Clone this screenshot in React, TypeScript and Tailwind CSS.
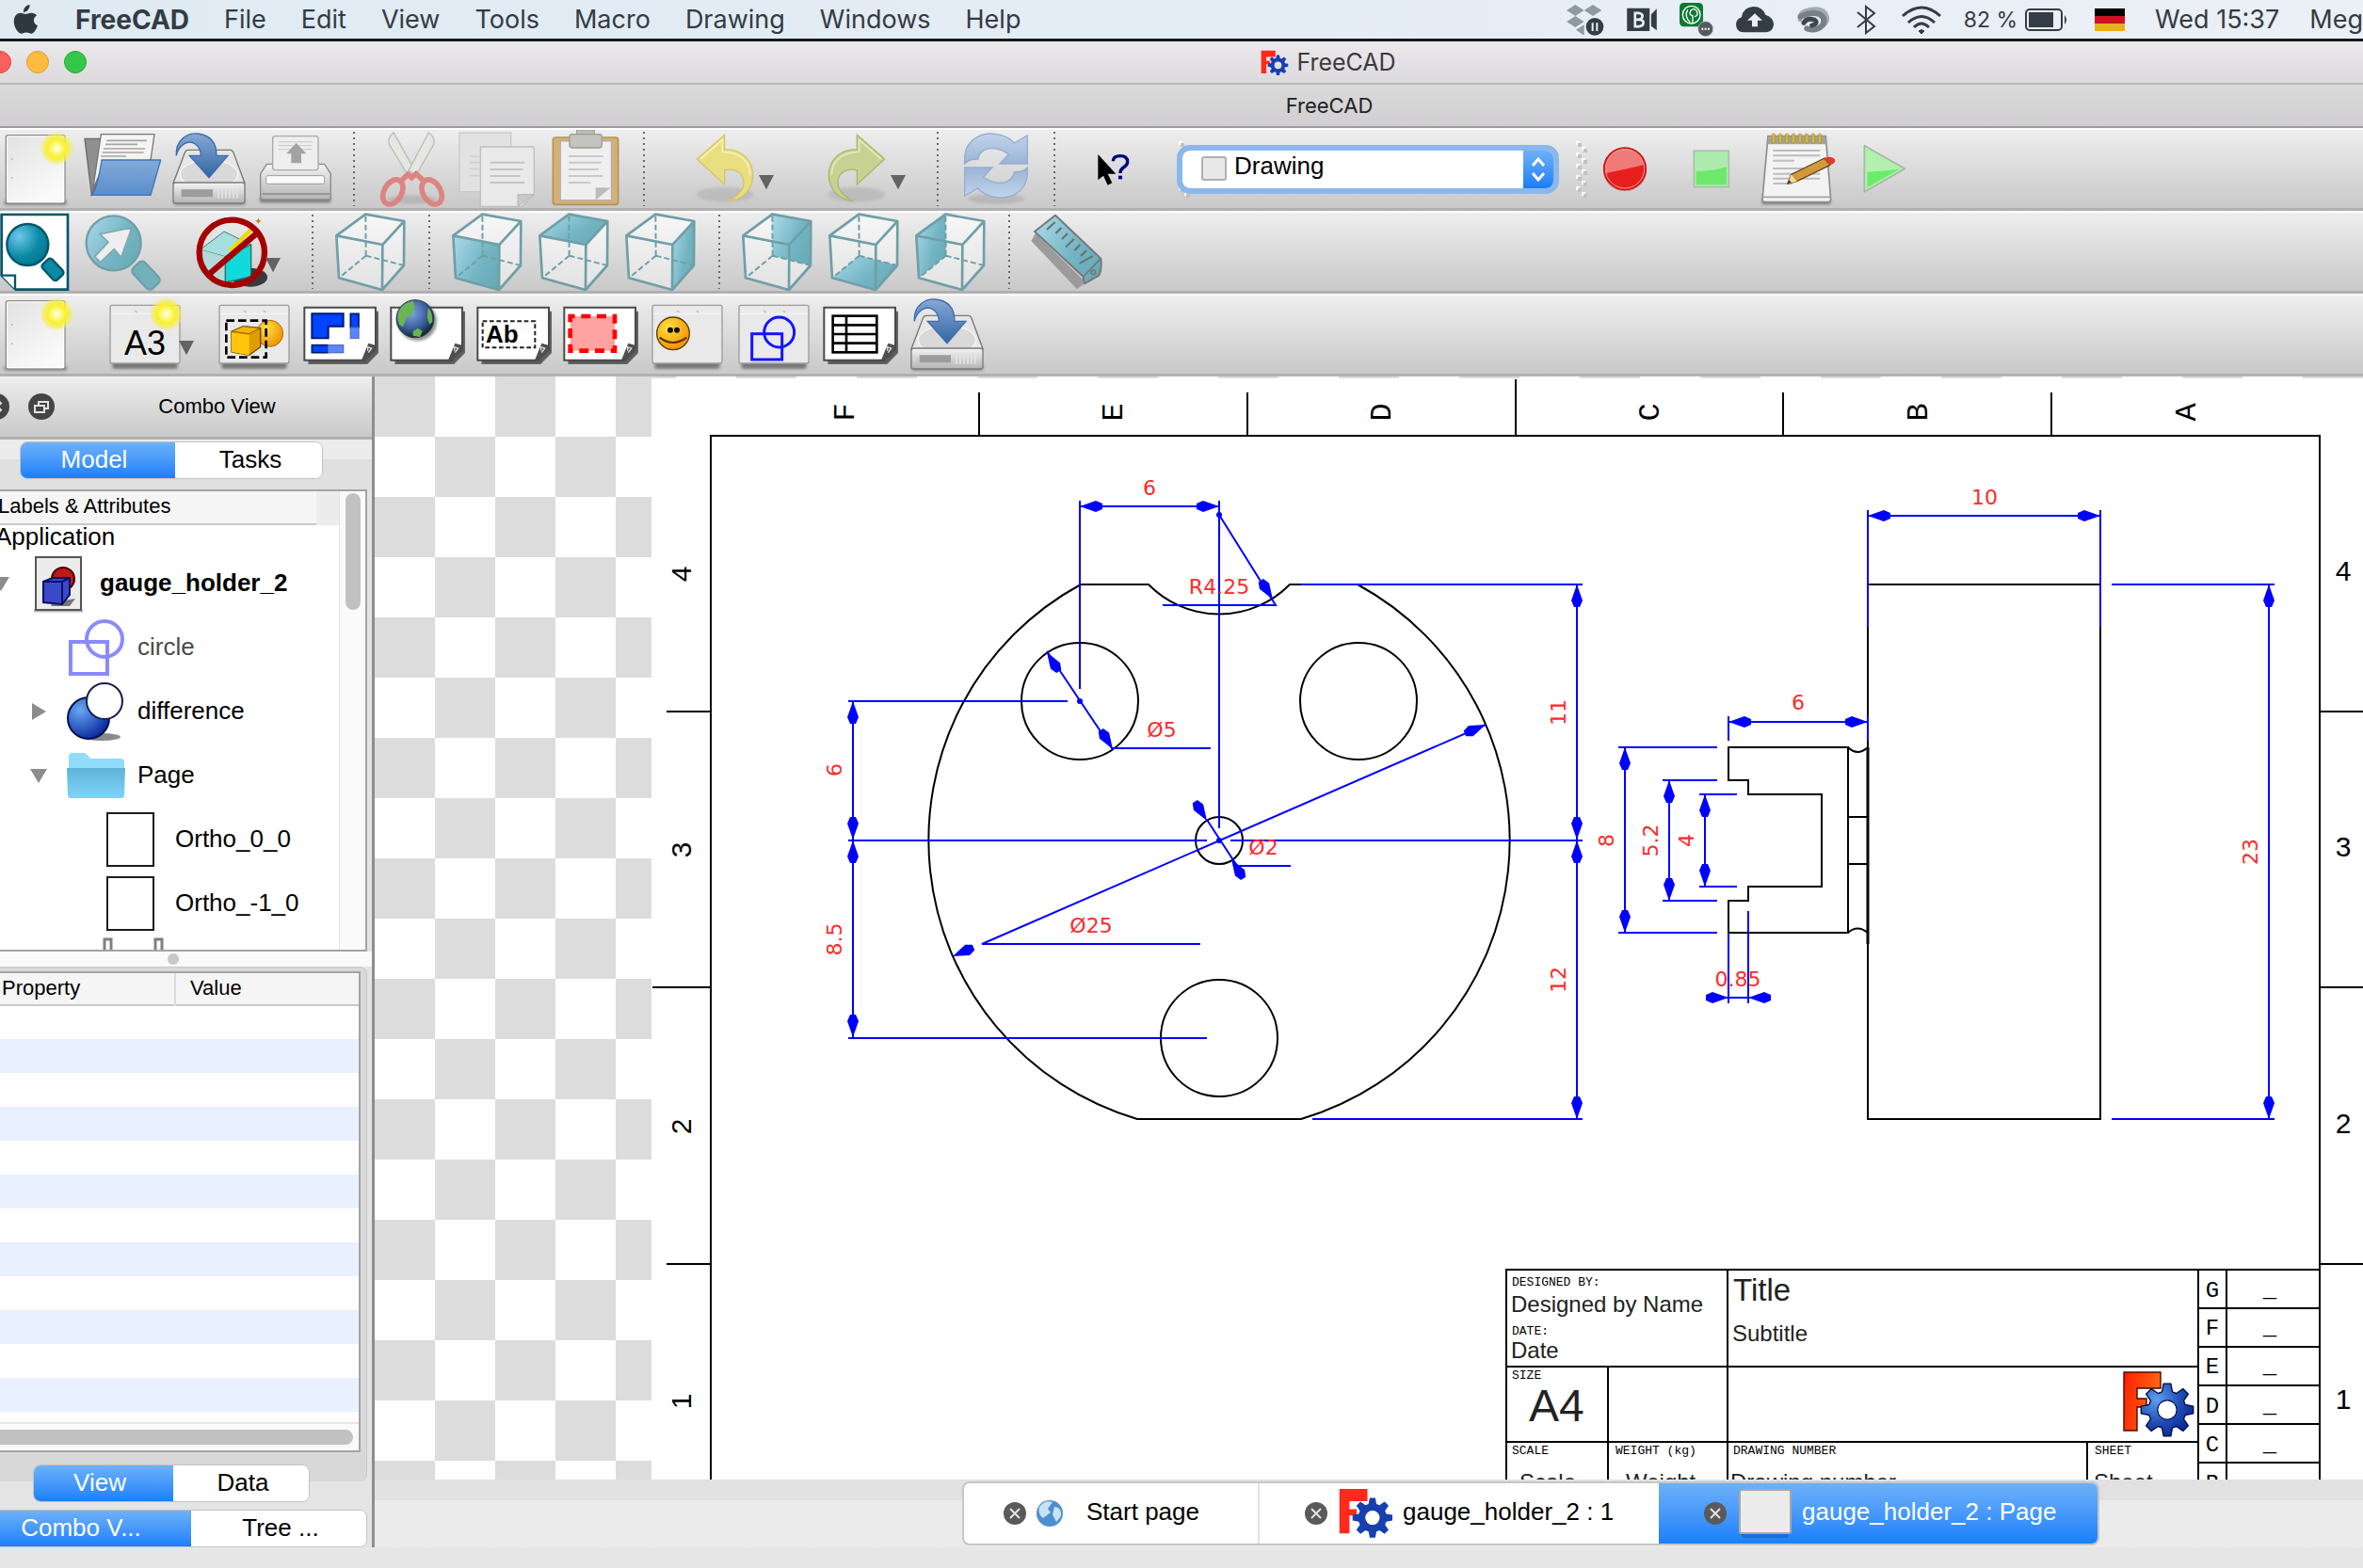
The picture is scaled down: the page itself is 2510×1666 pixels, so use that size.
import { useState } from "react";
import type { ReactNode } from "react";
import clsx from "clsx";

const MENUS = ["File", "Edit", "View", "Tools", "Macro", "Drawing", "Windows", "Help"];

const BAR =
  "flex h-[88px] shrink-0 items-stretch overflow-hidden border-t-2 border-b-3 border-t-white border-b-[#b0b0b0] bg-linear-to-b from-[#eeeeee] to-[#c9c9c9]";

/* ---------- shared drawing parts ---------- */

function Defs() {
  return (
    <svg className="absolute h-0 w-0" aria-hidden="true">
      <defs>
        <linearGradient id="paper" x1="0" y1="0" x2="0.6" y2="1">
          <stop offset="0" stopColor="#e2e2e2" />
          <stop offset="1" stopColor="#fafafa" />
        </linearGradient>
        <radialGradient id="sun">
          <stop offset="0" stopColor="#fffff0" />
          <stop offset="0.3" stopColor="#fdf87a" />
          <stop offset="0.55" stopColor="#f9f02e" />
          <stop offset="0.8" stopColor="#f6ee50" stopOpacity="0.7" />
          <stop offset="1" stopColor="#f6ee50" stopOpacity="0" />
        </radialGradient>
        <linearGradient id="folderBlue" x1="0" y1="0" x2="0" y2="1">
          <stop offset="0" stopColor="#82aadb" />
          <stop offset="1" stopColor="#5a8ecb" />
        </linearGradient>
        <linearGradient id="arrowBlue" x1="0" y1="0" x2="0" y2="1">
          <stop offset="0" stopColor="#86a9d6" />
          <stop offset="1" stopColor="#3465a4" />
        </linearGradient>
        <linearGradient id="arrowPale" x1="0" y1="0" x2="0" y2="1">
          <stop offset="0" stopColor="#c3d4ea" />
          <stop offset="1" stopColor="#9ab4d6" />
        </linearGradient>
        <linearGradient id="metal" x1="0" y1="0" x2="0" y2="1">
          <stop offset="0" stopColor="#f4f4f4" />
          <stop offset="1" stopColor="#b4b4b4" />
        </linearGradient>
        <linearGradient id="face" x1="0" y1="0.2" x2="1" y2="0.8">
          <stop offset="0" stopColor="#a5d5e8" />
          <stop offset="0.6" stopColor="#72b4c1" />
          <stop offset="1" stopColor="#68aab6" />
        </linearGradient>
        <linearGradient id="inside" x1="0" y1="0" x2="0" y2="1">
          <stop offset="0" stopColor="#f7f7f7" />
          <stop offset="1" stopColor="#e2e2e2" />
        </linearGradient>
        <radialGradient id="lens" cx="0.3" cy="0.3" r="0.75">
          <stop offset="0" stopColor="#6fc6ee" />
          <stop offset="0.65" stopColor="#0a8aa3" />
          <stop offset="1" stopColor="#04798f" />
        </radialGradient>
        <linearGradient id="logoRed" x1="0" y1="0" x2="1" y2="0.3">
          <stop offset="0" stopColor="#ff1e00" />
          <stop offset="1" stopColor="#ff6a14" />
        </linearGradient>
        <radialGradient id="gearBlue" cx="0.3" cy="0.3" r="0.75">
          <stop offset="0" stopColor="#5f9ff0" />
          <stop offset="0.6" stopColor="#1f4fb4" />
          <stop offset="1" stopColor="#0a2a96" />
        </radialGradient>
        <radialGradient id="earth" cx="0.4" cy="0.35" r="0.65">
          <stop offset="0" stopColor="#7fa6dc" />
          <stop offset="0.6" stopColor="#3e62a0" />
          <stop offset="1" stopColor="#14283c" />
        </radialGradient>
        <radialGradient id="gold" cx="0.35" cy="0.3" r="0.8">
          <stop offset="0" stopColor="#ffe040" />
          <stop offset="1" stopColor="#f08a00" />
        </radialGradient>
        <radialGradient id="ballBlue" cx="0.3" cy="0.3" r="0.8">
          <stop offset="0" stopColor="#66a8f4" />
          <stop offset="1" stopColor="#05229a" />
        </radialGradient>
        <linearGradient id="folderCyan" x1="0" y1="0" x2="0" y2="1">
          <stop offset="0" stopColor="#5fb2d8" />
          <stop offset="1" stopColor="#80d3f8" />
        </linearGradient>
        <filter id="soft" x="-50%" y="-50%" width="200%" height="200%">
          <feGaussianBlur stdDeviation="5" />
        </filter>
      </defs>
    </svg>
  );
}

function gearPath(cx: number, cy: number, outer: number, inner: number) {
  const parts: string[] = [];
  for (let i = 0; i < 8; i++) {
    const a = (i * Math.PI) / 4 - Math.PI / 2;
    for (const [r, d] of [[inner, -0.28], [outer, -0.14], [outer, 0.14], [inner, 0.28]]) {
      parts.push(`${(cx + r * Math.cos(a + d)).toFixed(1)} ${(cy + r * Math.sin(a + d)).toFixed(1)}`);
    }
  }
  return `M${parts.join("L")}Z`;
}

function LogoShapes({ outline = true }: { outline?: boolean }) {
  return (
    <>
      <path
        d="M1 2H40V19H15V30H25V39H15V64H1Z"
        fill={outline ? "url(#logoRed)" : "#ff2a1c"}
        stroke={outline ? "#4a0a00" : "none"}
        strokeWidth="1.4"
      />
      <path
        d={gearPath(47, 42, 28, 20) + "M37 42a10 10 0 1 0 20 0a10 10 0 1 0-20 0Z"}
        fillRule="evenodd"
        fill={outline ? "url(#gearBlue)" : "#173fae"}
        stroke={outline ? "#04104a" : "none"}
        strokeWidth="1.4"
        strokeLinejoin="round"
      />
      {outline && <circle cx="47" cy="42" r="9.5" fill="#fff" />}
    </>
  );
}

function Logo({ className }: { className: string }) {
  return (
    <svg viewBox="0 0 76 72" className={className} aria-hidden="true">
      <LogoShapes outline={false} />
    </svg>
  );
}

/* ---------- toolbar buttons, icons are drawn in a 276x249 box ---------- */

function Tool({ label, children }: { label: string; children: ReactNode }) {
  return (
    <button type="button" aria-label={label} className="shrink-0">
      <svg viewBox="0 0 276 249" className="block h-[83px] w-[92px]">
        {children}
      </svg>
    </button>
  );
}

function DropTool({ label, children }: { label: string; children: ReactNode }) {
  return (
    <button type="button" aria-label={label} className="shrink-0">
      <svg viewBox="0 0 420 249" className="block h-[83px] w-[140px]">
        <g transform="translate(72 0)">{children}</g>
        <path d="M318 144h48l-24 46Z" fill="#636363" />
      </svg>
    </button>
  );
}

function Separator() {
  return (
    <div className="flex w-8 shrink-0 justify-center py-[2px]">
      <div className="w-[2px] bg-[repeating-linear-gradient(to_bottom,#6a6a6a_0_2px,transparent_2px_6px)]" />
    </div>
  );
}

function Grip() {
  return (
    <svg viewBox="0 0 12 60" className="h-[60px] w-3 shrink-0 self-center" aria-hidden="true">
      {[0, 1, 2, 3, 4].map((i) => (
        <g key={i}>
          <path d={`M0 ${i * 12}h4v4h-4Z M6 ${i * 12 + 6}h4v4h-4Z`} fill="#fafafa" />
          <path d={`M2 ${i * 12 + 2}h4v4h-4Z M8 ${i * 12 + 8}h4v4h-4Z`} fill="#c2c2c2" />
        </g>
      ))}
    </svg>
  );
}

function NewIcon() {
  return (
    <>
      <rect x="36" y="224" width="202" height="16" rx="8" fill="#666" opacity="0.6" filter="url(#soft)" />
      <rect x="43" y="17" width="188" height="217" rx="6" fill="url(#paper)" stroke="#8a8a8a" strokeWidth="4" />
      <rect x="47" y="21" width="180" height="209" rx="3" fill="none" stroke="#fff" strokeWidth="3" />
      <circle cx="62" cy="93" r="3" fill="#bbb" />
      <circle cx="62" cy="153" r="3" fill="#bbb" />
      <circle cx="205" cy="59" r="54" fill="url(#sun)" />
    </>
  );
}

function SaveIcon() {
  return (
    <>
      <rect x="24" y="220" width="230" height="20" rx="8" fill="#555" opacity="0.5" filter="url(#soft)" />
      <path d="M72 64H206Q212 64 215 70L252 170H24L62 70Q65 64 72 64Z" fill="#e6e6e6" stroke="#777" strokeWidth="4" />
      <ellipse cx="138" cy="142" rx="92" ry="46" fill="#d9d9d9" stroke="#f6f6f6" strokeWidth="4" />
      <rect x="24" y="168" width="228" height="66" rx="8" fill="url(#metal)" stroke="#7a7a7a" strokeWidth="4" />
      <path d="M50 190H150V214H50Z" fill="#9c9c9c" />
      <path d="M168 188v30M180 188v30M192 188v30M204 188v30M216 188v30M228 188v30" stroke="#e4e4e4" strokeWidth="5" />
      <path
        d="M34 82C30 30 70 10 100 12C140 16 162 40 162 82H198L138 152L76 82H112C112 50 84 30 60 44C46 52 38 64 34 82Z"
        fill="url(#arrowBlue)"
        stroke="#3f6cab"
        strokeWidth="4"
      />
    </>
  );
}

function LightPage() {
  return (
    <>
      <rect x="34" y="208" width="208" height="26" rx="8" fill="#444" opacity="0.6" filter="url(#soft)" />
      <rect x="27" y="31" width="222" height="185" rx="6" fill="#e9e9e9" stroke="#9c9c9c" strokeWidth="4" />
      <path d="M30 58H246" stroke="#f6f6f6" strokeWidth="4" />
      <path d="M106 48l6 6M168 48l6 6" stroke="#b8b8b8" strokeWidth="4" />
    </>
  );
}

function DarkPage() {
  return (
    <>
      <path d="M36 204V217H222L256 182V52H248V176L218 206Z" fill="#5a5a5a" stroke="#666" strokeWidth="4" />
      <path d="M22 38H249V172L214 206H22Z" fill="#fff" stroke="#4b4b4b" strokeWidth="6" />
      <path d="M204 206L226 152L248 158L246 176L216 206Z" fill="#4e4e4e" />
      <path d="M224 176V164L236 168L226 182" fill="none" stroke="#ddd" strokeWidth="4" />
    </>
  );
}

const CUBE = {
  a: "121 5",
  b: "244 27",
  c: "175 102",
  d: "28 73",
  e: "122 137",
  f: "243 168",
  g: "174 246",
  h: "36 208",
};

const FACES: Record<string, (keyof typeof CUBE)[]> = {
  front: ["d", "c", "g", "h"],
  top: ["a", "b", "c", "d"],
  right: ["b", "f", "g", "c"],
  rear: ["a", "b", "f", "e"],
  bottom: ["e", "f", "g", "h"],
  left: ["a", "d", "h", "e"],
};

function CubeIcon({ face }: { face?: string }) {
  const p = CUBE;
  return (
    <>
      <path d={`M${p.a}L${p.b}L${p.f}L${p.g}L${p.h}L${p.d}Z`} fill="url(#inside)" />
      {face && <path d={`M${FACES[face].map((k) => p[k]).join("L")}Z`} fill="url(#face)" />}
      <path
        d={`M${p.e}L${p.a}M${p.e}L${p.f}M${p.e}L${p.h}`}
        fill="none"
        stroke="#6f9fa7"
        strokeWidth="6"
        strokeDasharray="18 9"
      />
      <path
        d={`M${p.a}L${p.b}L${p.f}L${p.g}L${p.h}L${p.d}ZM${p.d}L${p.c}L${p.b}M${p.c}L${p.g}`}
        fill="none"
        stroke="#6f9fa7"
        strokeWidth="8"
        strokeLinejoin="round"
      />
    </>
  );
}

const UNDO = "M49 93L137 16V62C196 62 228 100 227 145C226 190 195 222 150 227C190 205 200 185 198 165C196 135 170 122 137 128V174Z";
const HALF_TURN = "M38 108V84C44 24 100 6 140 14C168 18 184 28 196 42L238 18V108H150L178 78C130 44 84 60 80 94C60 92 48 98 38 108Z";

function FileToolbar() {
  return (
    <div className={BAR}>
      <div className="-ml-2 flex shrink-0">
        <Tool label="New">
          <NewIcon />
        </Tool>
        <Tool label="Open">
          <path d="M18 28H70L84 110L40 206Z" fill="#8f8f8f" stroke="#6a6a6a" strokeWidth="4" />
          <path d="M70 14H240L228 96L70 130L44 190Z" fill="#f4f4f4" stroke="#777" strokeWidth="4" />
          <path d="M88 34H216M84 46H186M78 60H210M74 72H206M70 84H150" stroke="#a5a5a5" strokeWidth="5" />
          <path d="M38 214H226" stroke="#555" strokeWidth="10" opacity="0.5" filter="url(#soft)" />
          <path d="M72 96H260L228 208H38Q56 200 72 96Z" fill="url(#folderBlue)" stroke="#3f74b8" strokeWidth="4" strokeLinejoin="round" />
        </Tool>
        <Tool label="Save">
          <SaveIcon />
        </Tool>
        <Tool label="Print">
          <rect x="24" y="212" width="226" height="20" rx="8" fill="#444" opacity="0.6" filter="url(#soft)" />
          <path d="M46 109H230L250 140V215Q250 222 242 222H34Q26 222 26 215V140Z" fill="url(#metal)" stroke="#8a8a8a" strokeWidth="4" />
          <rect x="65" y="20" width="145" height="108" rx="8" fill="#eee" stroke="#aaa" strokeWidth="4" />
          <path d="M84 38H190M84 50H190M84 62H190" stroke="#cfcfcf" strokeWidth="4" />
          <path d="M140 42L172 76H156V106H124V76H108Z" fill="#a2a2a2" />
          <rect x="44" y="146" width="186" height="26" rx="6" fill="#fbfbfb" stroke="#999" strokeWidth="3" />
          <path d="M32 204H246" stroke="#8a8a8a" strokeWidth="4" />
        </Tool>
        <Separator />
        <Tool label="Cut">
          <ellipse cx="138" cy="222" rx="80" ry="14" fill="#999" opacity="0.4" filter="url(#soft)" />
          <path d="M78 8Q56 28 64 46L124 144L146 130Z" fill="#e6e6e2" stroke="#bdbdb8" strokeWidth="4" />
          <path d="M190 8Q214 28 206 46L150 144L126 130Z" fill="#e6e6e2" stroke="#bdbdb8" strokeWidth="4" />
          <g fill="none" stroke="#dc8482" strokeWidth="17">
            <ellipse cx="76" cy="198" rx="28" ry="42" transform="rotate(30 76 198)" />
            <ellipse cx="200" cy="198" rx="28" ry="42" transform="rotate(-30 200 198)" />
            <path d="M100 164L124 142L136 152L150 140L176 164" />
          </g>
        </Tool>
        <Tool label="Copy">
          <rect x="12" y="9" width="164" height="188" fill="#e2e2e2" stroke="#cacaca" strokeWidth="4" />
          <path d="M44 84H76M44 104H76M44 124H76M44 146H76" stroke="#cfcfcf" strokeWidth="5" />
          <path d="M79 54H246Q250 54 250 60V206L210 244H79Z" fill="#e9e9e9" stroke="#bfbfbf" strokeWidth="4" />
          <path d="M198 244V206H248Z" fill="#c9c9c9" stroke="#b4b4b4" strokeWidth="3" />
          <path d="M110 104H220M110 126H214M110 147H206M110 168H220" stroke="#c4c4c4" strokeWidth="6" />
        </Tool>
        <Tool label="Paste">
          <rect x="34" y="24" width="208" height="214" rx="8" fill="#d3b078" stroke="#b59258" strokeWidth="5" />
          <rect x="58" y="36" width="162" height="188" fill="#efefef" stroke="#aaa" strokeWidth="3" />
          <path d="M170 224V184H218Z" fill="#bcbcbc" />
          <path d="M84 84H194M84 104H188M84 126H180M84 147H194M84 168H154" stroke="#c9c9c9" strokeWidth="6" />
          <path d="M110 0H166V18H110Z" fill="#bdbdb6" stroke="#999" strokeWidth="3" />
          <rect x="87" y="14" width="103" height="43" rx="8" fill="#c4c4be" stroke="#9c9c96" strokeWidth="4" />
        </Tool>
        <Separator />
        <DropTool label="Undo">
          <ellipse cx="138" cy="206" rx="90" ry="24" fill="#aaa" opacity="0.5" filter="url(#soft)" />
          <path d={UNDO} fill="#e9de80" stroke="#d3c668" strokeWidth="4" />
          <path d="M60 93L130 32V70C186 70 218 100 218 145" fill="none" stroke="#f7f1b4" strokeWidth="5" />
        </DropTool>
        <DropTool label="Redo">
          <ellipse cx="138" cy="206" rx="90" ry="24" fill="#aaa" opacity="0.5" filter="url(#soft)" />
          <g transform="translate(276 0) scale(-1 1)">
            <path d={UNDO} fill="#c6d192" stroke="#aab96e" strokeWidth="4" />
            <path d="M60 93L130 32V70C186 70 218 100 218 145" fill="none" stroke="#e2ebbc" strokeWidth="5" />
          </g>
        </DropTool>
        <Separator />
        <Tool label="Refresh">
          <ellipse cx="138" cy="220" rx="90" ry="16" fill="#999" opacity="0.4" filter="url(#soft)" />
          <path d={HALF_TURN} fill="url(#arrowPale)" stroke="#94aed2" strokeWidth="4" />
          <path d={HALF_TURN} fill="url(#arrowPale)" stroke="#94aed2" strokeWidth="4" transform="rotate(180 138 114)" />
        </Tool>
        <Separator />
        <Tool label="What's This?">
          <path d="M91 78V160L108 146L122 176L136 169L122 140H148Z" fill="#000" />
          <path d="M139 100Q139 83 162 83Q185 83 185 102Q185 112 172 120Q162 126 162 138" fill="none" stroke="#000080" strokeWidth="10" />
          <rect x="156" y="146" width="12" height="11" fill="#000080" />
        </Tool>
      </div>
      <div className="flex shrink-0 items-center pl-6">
        <Grip />
        <div className="relative z-10 -ml-2 flex h-10 w-[394px] rounded-lg bg-white outline-6 outline-[#8bb8ea]">
          <svg viewBox="0 0 28 30" className="pointer-events-none absolute top-1 left-5 h-[30px] w-7" aria-hidden="true">
            <rect x="1" y="3" width="25" height="24" rx="2" fill="#e8e8e8" stroke="#b0b0b0" strokeWidth="2" />
          </svg>
          <select
            aria-label="Workbench"
            defaultValue="Drawing"
            className="h-8 w-full appearance-none bg-transparent pl-[55px] text-[26px] leading-8 text-black outline-none"
          >
            <option>Drawing</option>
          </select>
          <div className="pointer-events-none absolute top-0 right-0 flex h-10 w-8 items-center justify-center rounded-r-lg bg-linear-to-b from-[#6cb0f7] to-[#177dfb]">
            <svg viewBox="0 0 16 26" className="h-[26px] w-4" fill="none" stroke="#fff" strokeWidth="3">
              <path d="M2 9L8 2L14 9M2 17L8 24L14 17" />
            </svg>
          </div>
        </div>
      </div>
      <div className="flex shrink-0 items-center pl-6">
        <Grip />
      </div>
      <div className="-ml-[6px] flex shrink-0">
        <Tool label="Record macro">
          <circle cx="138" cy="126" r="70" fill="#c22" opacity="0.4" />
          <circle cx="138" cy="124" r="67" fill="#e81e1e" stroke="#c01818" strokeWidth="4" />
          <path d="M78 128A60 60 0 0 1 197 112Q140 126 78 138Z" fill="#f07a78" />
          <circle cx="138" cy="124" r="62" fill="none" stroke="#f29a98" strokeWidth="3" />
        </Tool>
        <Tool label="Stop macro">
          <rect x="82" y="67" width="111" height="115" fill="#aeecae" stroke="#a9bfa9" strokeWidth="5" />
          <path d="M89 132Q150 130 186 118V175H89Z" fill="#6de86a" />
        </Tool>
        <Tool label="Macros">
          <rect x="22" y="222" width="220" height="16" rx="8" fill="#333" opacity="0.5" filter="url(#soft)" />
          <path d="M42 20H226L242 222Q242 230 234 230H32Q24 230 24 222Z" fill="#f3f3f3" stroke="#8c8c8c" strokeWidth="5" />
          <path d="M44 20H226L228 46H40Z" fill="#a3a39c" />
          <path d="M26 214H240" stroke="#a6a6a6" strokeWidth="5" />
          {[60, 81, 102, 123, 144, 165, 186, 207].map((x) => (
            <rect key={x} x={x - 5} y="12" width="10" height="30" rx="5" fill="#d6b93a" stroke="#a88c20" strokeWidth="2" />
          ))}
          <path d="M58 66H208M58 82H208M58 98H126M58 123H208M58 140H208M58 155H208M58 171H120" stroke="#bdbdbd" strokeWidth="6" />
          <path d="M104 172L116 142L222 90L240 112L134 164Z" fill="#d09a3c" stroke="#6d4a14" strokeWidth="4" strokeLinejoin="round" />
          <path d="M104 172L116 142L134 164Z" fill="#efd9a0" />
          <path d="M104 172L109 160L116 167Z" fill="#222" />
          <path d="M222 90Q240 82 254 92Q262 104 240 112Z" fill="#e33a2c" />
        </Tool>
        <Tool label="Execute macro">
          <path d="M73 50L202 124L73 198Z" fill="#b2f0b0" stroke="#a6b8a6" strokeWidth="5" strokeLinejoin="round" />
          <path d="M82 134Q140 132 188 124L82 184Z" fill="#6deb6a" />
        </Tool>
      </div>
    </div>
  );
}

function ViewToolbar() {
  return (
    <div className={BAR}>
      <div className="-ml-2 flex shrink-0">
        <Tool label="Fit all">
          <path d="M29 6H240V245H74L29 200Z" fill="#fff" stroke="#06566a" strokeWidth="8" />
          <path d="M29 200H72V244" fill="#fff" stroke="#06566a" strokeWidth="7" />
          <circle cx="112" cy="102" r="66" fill="url(#lens)" stroke="#06566a" strokeWidth="7" />
          <rect x="158" y="160" width="68" height="42" rx="10" fill="#0a8aa3" stroke="#06566a" strokeWidth="7" transform="rotate(47 192 181)" />
        </Tool>
        <Tool label="Fit selection">
          <circle cx="110" cy="97" r="87" fill="url(#face)" stroke="#6f9fa7" strokeWidth="7" />
          <rect x="168" y="174" width="90" height="52" rx="14" fill="#72b0bc" stroke="#6f9fa7" strokeWidth="7" transform="rotate(47 213 200)" />
          <path d="M168 48L66 68L93 94L50 140L68 158L112 116L134 142Z" fill="#eee" stroke="#7fa8b0" strokeWidth="5" strokeLinejoin="round" />
        </Tool>
        <DropTool label="Draw style">
          <ellipse cx="196" cy="206" rx="56" ry="30" fill="#3a3a3a" />
          <path d="M38 118L114 60L200 102L118 140Z" fill="#a6e0de" stroke="#447a7a" strokeWidth="3" />
          <path d="M38 118L118 140V222L38 196Z" fill="#b4dad8" />
          <path d="M118 140L200 102V204L118 222Z" fill="#10dada" stroke="#2a6a6c" strokeWidth="4" />
          <path d="M202 52L133 122" stroke="#f0d800" strokeWidth="13" />
          <path d="M223 17L226 24L233 26L226 29L223 36L220 29L213 26L220 24Z" fill="#c47a10" />
          <circle cx="139" cy="127" r="104" fill="none" stroke="#a50000" strokeWidth="19" />
          <path d="M66 196L218 66" stroke="#a50000" strokeWidth="19" />
        </DropTool>
        <Separator />
        <Tool label="Axonometric">
          <CubeIcon />
        </Tool>
        <Separator />
        <Tool label="Front">
          <CubeIcon face="front" />
        </Tool>
        <Tool label="Top">
          <CubeIcon face="top" />
        </Tool>
        <Tool label="Right">
          <CubeIcon face="right" />
        </Tool>
        <Separator />
        <Tool label="Rear">
          <CubeIcon face="rear" />
        </Tool>
        <Tool label="Bottom">
          <CubeIcon face="bottom" />
        </Tool>
        <Tool label="Left">
          <CubeIcon face="left" />
        </Tool>
        <Separator />
        <Tool label="Measure distance">
          <path d="M36 66L22 90L168 244L196 222Z" fill="#9b9b9b" />
          <path d="M99 8L33 60L188 204Q188 214 192 226L238 200Q248 180 244 146Z" fill="url(#face)" stroke="#76797a" strokeWidth="6" strokeLinejoin="round" />
          <path d="M188 204L244 146" stroke="#76797a" strokeWidth="5" />
          <path d="M98 30L72 54M118 48L100 66M138 66L120 84M158 84L132 110M178 102L160 120M198 120L180 138M218 138L176 162" stroke="#6c6c6c" strokeWidth="6" />
          <circle cx="220" cy="190" r="7" fill="none" stroke="#6c7a7c" strokeWidth="5" />
        </Tool>
      </div>
    </div>
  );
}

function DrawingToolbar() {
  return (
    <div className={BAR}>
      <div className="-ml-2 flex shrink-0">
        <Tool label="New drawing">
          <NewIcon />
        </Tool>
        <DropTool label="New A3 page">
          <LightPage />
          <text x="138" y="188" fontSize="108" textAnchor="middle" className="font-['Liberation_Sans',sans-serif]">
            A3
          </text>
          <circle cx="206" cy="59" r="54" fill="url(#sun)" />
        </DropTool>
        <Tool label="Insert view">
          <LightPage />
          <circle cx="188" cy="121" r="42" fill="url(#gold)" stroke="#a86c00" strokeWidth="3" />
          <path d="M66 114L104 98L158 104V164L122 190L66 180Z" fill="#e09c00" stroke="#6a4a00" strokeWidth="4" />
          <path d="M66 118L122 126V190L66 180Z" fill="#ffc60a" />
          <path d="M66 114L104 98L158 104L122 122Z" fill="#f3b408" stroke="#8a6000" strokeWidth="3" />
          <rect x="49" y="80" width="127" height="117" fill="none" stroke="#000" strokeWidth="8" strokeDasharray="26 12" />
        </Tool>
        <Tool label="Orthographic views">
          <DarkPage />
          <path d="M46 58H146V98H98V136H46Z" fill="#0044ff" stroke="#001a70" strokeWidth="6" />
          <rect x="169" y="58" width="26" height="44" fill="#0044ff" stroke="#001a70" strokeWidth="5" />
          <rect x="169" y="102" width="26" height="34" fill="#5a86ff" stroke="#5570c8" strokeWidth="4" />
          <rect x="46" y="158" width="52" height="24" fill="#0044ff" stroke="#001a70" strokeWidth="5" />
          <rect x="98" y="158" width="48" height="24" fill="#5a86ff" stroke="#5570c8" strokeWidth="4" />
        </Tool>
        <Tool label="Open browser view">
          <DarkPage />
          <circle cx="106" cy="82" r="62" fill="#666" opacity="0.7" filter="url(#soft)" />
          <circle cx="99" cy="74" r="60" fill="url(#earth)" stroke="#2b3b48" strokeWidth="3" />
          <path d="M46 50Q60 22 92 18L98 36L88 60L72 70L60 100L48 92Q40 70 46 50Z" fill="#6cb454" />
          <path d="M92 114L108 104L122 114L114 132L92 128Z" fill="#6cb454" />
          <path d="M140 38Q156 54 154 84L144 92L138 70Z" fill="#6cb454" />
        </Tool>
        <Tool label="Annotation">
          <DarkPage />
          <rect x="38" y="82" width="167" height="84" fill="none" stroke="#222" strokeWidth="6" strokeDasharray="14 8" />
          <text x="48" y="150" fontSize="78" fontWeight="700" className="font-['Liberation_Sans',sans-serif]">
            Ab
          </text>
        </Tool>
        <Tool label="Clip">
          <DarkPage />
          <rect x="41" y="66" width="142" height="110" fill="#ffa2a2" stroke="#ff0000" strokeWidth="14" strokeDasharray="30 20" strokeDashoffset="15" />
        </Tool>
        <Tool label="Symbol">
          <LightPage />
          <circle cx="93" cy="121" r="52" fill="url(#gold)" stroke="#5c3a00" strokeWidth="4" />
          <circle cx="84" cy="110" r="9" fill="#111" />
          <circle cx="105" cy="110" r="9" fill="#111" />
          <path d="M50 134Q92 166 136 134" fill="none" stroke="#5c3000" strokeWidth="6" />
        </Tool>
        <Tool label="Draft view">
          <LightPage />
          <circle cx="155" cy="117" r="48" fill="none" stroke="#1414ff" strokeWidth="9" />
          <rect x="68" y="122" width="96" height="82" fill="none" stroke="#1414ff" strokeWidth="9" />
        </Tool>
        <Tool label="Spreadsheet view">
          <DarkPage />
          <rect x="50" y="65" width="140" height="116" fill="#fff" stroke="#000" strokeWidth="8" />
          <path d="M93 65V181M50 94H190M50 123H190M50 152H190" stroke="#000" strokeWidth="8" />
        </Tool>
        <Tool label="Save sheet">
          <SaveIcon />
        </Tool>
      </div>
    </div>
  );
}

/* ---------- mac menu bar ---------- */

function MenuBar() {
  return (
    <header className="flex h-11 shrink-0 items-center overflow-hidden border-b-3 border-[#15191d] bg-linear-to-r from-[#dfeaf3] to-[#ebf0f6] pl-[14px] font-['Inter',sans-serif] text-[27px] leading-8 whitespace-nowrap text-[#333b44]">
      <svg viewBox="0 0 26 32" className="h-8 w-[26px] shrink-0" fill="#2f3840" aria-hidden="true">
        <path d="M17.5 0c.3 2.3-.8 4.300-2 5.700-1.200 1.400-3 2.300-4.600 2.200-.3-2.200.8-4.300 1.900-5.500C14 1 16 .1 17.500 0ZM25 11.400c-2 1.200-3.200 3-3.100 5.200.1 2.700 1.700 4.700 4 5.600-1 3-3.500 8.400-6.700 8.500-1.900 0-2.800-1.200-5.200-1.200s-3.400 1.200-5.200 1.200C4.500 30.800.6 22.800.8 17.300.9 12 4.200 8.800 8 8.800c2.200 0 3.900 1.300 5.200 1.300 1.300 0 3.500-1.500 6.200-1.300 2.300.1 4.200 1 5.600 2.600Z" />
      </svg>
      <nav className="flex shrink-0 gap-[37px] pl-10">
        <button type="button" className="text-[28px] font-bold">
          FreeCAD
        </button>
        {MENUS.map((m) => (
          <button key={m} type="button">
            {m}
          </button>
        ))}
      </nav>
      <div className="ml-auto flex shrink-0 items-center gap-6">
        <svg viewBox="0 0 120 108" className="h-9 w-10" aria-hidden="true">
          <path d="M28 6L56 24L28 42L0 24ZM84 6L112 24L84 42L56 24ZM28 42L56 60L28 78L0 60ZM30 86L56 70V104Z" fill="#8f99a3" />
          <circle cx="90" cy="76" r="28" fill="#343c45" />
          <path d="M80 64H86V90H80ZM94 64H100V90H94Z" fill="#e8eff5" />
        </svg>
        <svg viewBox="0 0 96 76" className="h-[25px] w-8" aria-hidden="true">
          <path d="M0 2H73V76H0ZM78 22L96 4V74L78 60Z" fill="#343c45" />
          <path d="M26 18H40Q51 20 50 29Q48 38 38 39H26ZM38 39Q54 40 53 50Q52 60 40 61H26V39" fill="none" stroke="#e8eff5" strokeWidth="8" />
        </svg>
        <svg viewBox="0 0 108 108" className="h-9 w-9" aria-hidden="true">
          <rect x="0" y="0" width="75" height="76" rx="14" fill="#0d7a34" />
          <circle cx="38" cy="38" r="28" fill="none" stroke="#fff" strokeWidth="4" />
          <path d="M42 64V42Q28 38 36 24Q48 14 56 28Q60 42 48 44M26 22Q14 44 34 62" fill="none" stroke="#fff" strokeWidth="4" />
          <circle cx="83" cy="83" r="24" fill="#565a5f" stroke="#cfd3d6" strokeWidth="2" />
          <path d="M70 80h6v6h-6ZM80 80h6v6h-6ZM90 80h6v6h-6Z" fill="#fff" />
        </svg>
        <svg viewBox="0 0 120 84" className="h-7 w-10" aria-hidden="true">
          <path d="M24 82Q0 80 0 56Q2 38 18 34Q22 2 56 0Q84 0 94 26Q120 34 120 58Q118 80 96 82Z" fill="#343c45" />
          <path d="M60 22L84 44H69V64H51V44H36Z" fill="#eaf0f6" />
        </svg>
        <svg viewBox="0 0 108 84" className="h-7 w-9" fill="none" strokeLinecap="round" aria-hidden="true">
          <path d="M12 42Q8 16 44 10Q90 0 98 34Q100 56 76 66" stroke="#a4abb2" strokeWidth="14" />
          <path d="M14 32Q44 16 74 24Q96 38 84 58Q68 80 34 70" stroke="#777f87" strokeWidth="18" />
          <path d="M24 52Q34 34 58 42Q72 52 50 60" stroke="#3d454d" strokeWidth="15" />
        </svg>
        <svg viewBox="0 0 28 32" className="h-8 w-7" fill="none" stroke="#343c45" strokeWidth="2" aria-hidden="true">
          <path d="M5 8L23 23L14 30V2L23 9L5 24" />
        </svg>
        <svg viewBox="0 0 42 32" className="h-8 w-[42px]" fill="none" stroke="#343c45" strokeWidth="3" aria-hidden="true">
          <path d="M1 12Q21 -6 41 12M7 19Q21 6 35 19M13 24Q21 16 29 24" />
          <path d="M18 28Q21 25 24 28L21 31Z" fill="#343c45" strokeWidth="1" />
        </svg>
        <span className="flex items-center gap-2 text-[23px]">
          82 %
          <svg viewBox="0 0 46 24" className="h-6 w-[46px]" aria-hidden="true">
            <rect x="1" y="1" width="38" height="22" rx="4" fill="none" stroke="#343c45" strokeWidth="2" />
            <rect x="4" y="4" width="26" height="16" fill="#343c45" />
            <path d="M42 7Q46 12 42 17Z" fill="#343c45" />
          </svg>
        </span>
        <svg viewBox="0 0 32 24" className="ml-1 h-6 w-8" aria-hidden="true">
          <path d="M0 0H32V8H0Z" fill="#000" />
          <path d="M0 8H32V16H0Z" fill="#cf1126" />
          <path d="M0 16H32V24H0Z" fill="#e8b21c" />
        </svg>
        <span className="ml-2">Wed 15:37</span>
        <span className="ml-2">Meg</span>
      </div>
    </header>
  );
}

function TitleBars() {
  return (
    <>
      <div className="relative flex h-[46px] shrink-0 items-center justify-center gap-2 border-b-2 border-[#b9b7ba] bg-linear-to-b from-[#ebe9ec] to-[#dcdadd] pt-[2px] pl-[312px] font-['Inter',sans-serif] text-[25px] text-[#3c3a3d]">
        <div className="absolute top-[10px] -left-3 flex gap-4">
          <button type="button" aria-label="Close" className="size-6 rounded-full border border-[#e0443e] bg-[#fc605c]" />
          <button type="button" aria-label="Minimize" className="size-6 rounded-full border border-[#dea034] bg-[#fdbc40]" />
          <button type="button" aria-label="Zoom" className="size-6 rounded-full border border-[#27a835] bg-[#34c84a]" />
        </div>
        <Logo className="h-7 w-[30px]" />
        <h1>FreeCAD</h1>
      </div>
      <div className="flex h-[46px] shrink-0 items-center justify-center border-b-2 border-[#9c9a9c] bg-linear-to-b from-[#dadada] to-[#d1cfd1] pl-[314px] font-['Inter',sans-serif] text-[22px] text-[#222]">
        FreeCAD
      </div>
    </>
  );
}

/* ---------- combo view ---------- */

function Segments({
  items,
  active,
  onSelect,
  className,
  firstClass,
}: {
  items: string[];
  active: string;
  onSelect: (item: string) => void;
  className: string;
  firstClass: string;
}) {
  return (
    <div className={clsx("flex h-10 shrink-0 overflow-hidden rounded-lg border border-[#c2c2c2] bg-white text-[26px] leading-9", className)}>
      {items.map((item, i) => (
        <button
          key={item}
          type="button"
          onClick={() => onSelect(item)}
          className={clsx(
            "pb-[2px]",
            i === 0 ? firstClass : "flex-1 pl-1",
            item === active ? "bg-linear-to-b from-[#6cb1f8] to-[#187ffc] text-white" : "bg-white text-black",
          )}
        >
          {item}
        </button>
      ))}
    </div>
  );
}

function Arrow({ open }: { open: boolean }) {
  return (
    <svg viewBox="0 0 22 22" className="size-[22px]" fill="#8c8c8c" aria-hidden="true">
      <path d={open ? "M2 4H20L11 19Z" : "M4 2L19 11L4 20Z"} />
    </svg>
  );
}

const SquareIcon = (
  <svg viewBox="0 0 64 64" className="size-16">
    <rect x="4" y="4" width="49" height="56" fill="#fff" stroke="#1c1c1c" strokeWidth="2" />
  </svg>
);

const TREE: { label: string; level: string; arrow?: "open" | "closed"; style?: string; icon: ReactNode }[] = [
  {
    label: "gauge_holder_2",
    level: "-ml-[10px]",
    arrow: "open",
    style: "font-bold",
    icon: (
      <svg viewBox="0 0 64 64" className="size-16">
        <path d="M6 61H58" stroke="#bbb" strokeWidth="3" />
        <rect x="8" y="4" width="48" height="56" fill="#ececec" stroke="#555" strokeWidth="2" />
        <path d="M26 52L50 48L44 56H24Z" fill="#777" />
        <circle cx="37" cy="27" r="12" fill="#c01818" stroke="#400" strokeWidth="2" />
        <path d="M16 30L26 26H44V44L36 54L16 52Z" fill="#3a49c8" stroke="#0a1060" strokeWidth="2" />
        <path d="M16 30H36V54M36 30L44 26" fill="none" stroke="#0a1060" strokeWidth="2" />
      </svg>
    ),
  },
  {
    label: "circle",
    level: "ml-[30px]",
    style: "text-[#4a4a4a]",
    icon: (
      <svg viewBox="0 0 64 64" className="size-16" fill="none" stroke="#8a8aff" strokeWidth="4">
        <circle cx="41" cy="23" r="19" />
        <rect x="5" y="26" width="39" height="34" />
      </svg>
    ),
  },
  {
    label: "difference",
    level: "ml-[30px]",
    arrow: "closed",
    icon: (
      <svg viewBox="0 0 64 64" className="size-16">
        <ellipse cx="38" cy="59" rx="20" ry="4" fill="#8a8a8a" />
        <circle cx="24" cy="39" r="22" fill="url(#ballBlue)" stroke="#05124c" strokeWidth="2" />
        <circle cx="41" cy="21" r="19" fill="#fff" stroke="#1c1c50" strokeWidth="2" />
      </svg>
    ),
  },
  {
    label: "Page",
    level: "ml-[30px]",
    arrow: "open",
    icon: (
      <svg viewBox="0 0 64 64" className="size-16">
        <path d="M3 24V12Q3 8 7 8H19Q22 8 26 14H58Q62 14 62 18V24Z" fill="#8fdcfb" />
        <path d="M1 24H63L62 53Q62 56 59 56H5Q2 56 2 53Z" fill="url(#folderCyan)" />
      </svg>
    ),
  },
  { label: "Ortho_0_0", level: "ml-[70px]", icon: SquareIcon },
  { label: "Ortho_-1_0", level: "ml-[70px]", icon: SquareIcon },
];

const PROPERTY_ROWS = Array.from({ length: 13 }, (_, i) => i);

function ComboView() {
  const [tab, setTab] = useState("Model");
  const [propTab, setPropTab] = useState("View");
  const [dock, setDock] = useState("Combo V...");

  return (
    <aside className="flex w-[398px] shrink-0 flex-col border-r-3 border-[#8e8e8e] bg-[#e4e4e4] text-black">
      <div className="flex h-[67px] shrink-0 items-center border-b-3 border-[#b0b0b0] bg-linear-to-b from-[#eeeeee] to-[#c9c9c9]">
        <button type="button" aria-label="Close panel" className="-ml-[18px] shrink-0">
          <svg viewBox="0 0 28 28" className="size-7">
            <circle cx="14" cy="14" r="14" fill="#454545" />
            <path d="M9 9L19 19M19 9L9 19" stroke="#e4e4e4" strokeWidth="4" />
          </svg>
        </button>
        <button type="button" aria-label="Float panel" className="ml-5 shrink-0">
          <svg viewBox="0 0 28 28" className="size-7">
            <circle cx="14" cy="14" r="14" fill="#454545" />
            <path d="M7 13H17V20H7ZM11 12V9H21V16H18" fill="none" stroke="#e4e4e4" strokeWidth="2" />
          </svg>
        </button>
        <h2 className="flex-1 pb-[2px] pl-2 text-center text-[22px]">Combo View</h2>
      </div>

      <div className="flex h-[53px] shrink-0 items-start bg-linear-to-b from-[#ececec] from-40% to-[#e0e0e0] to-40% pt-[2px] pl-[21px]">
        <Segments items={["Model", "Tasks"]} active={tab} onSelect={setTab} className="w-[322px]" firstClass="w-[164px] pr-2" />
      </div>

      <div className="mr-[5px] flex h-[491px] shrink-0 overflow-hidden border-t-2 border-r-2 border-b-2 border-[#a4a4a4] bg-white">
        <div className="flex-1 overflow-hidden">
          <div className="flex h-9 bg-[#ececec] text-[22px] leading-8">
            <div className="-ml-[2px] w-[338px] border-b-2 border-[#c8c8c8] bg-[#f5f5f5]">Labels &amp; Attributes</div>
          </div>
          <div className="-ml-[5px] h-7 text-[26px] leading-6">Application</div>
          <ul className="text-[26px]">
            {TREE.map((row) => (
              <li key={row.label} className={clsx("flex h-[68px] items-center", row.level)}>
                <span className="w-10 shrink-0">{row.arrow && <Arrow open={row.arrow === "open"} />}</span>
                <span className="mr-3 shrink-0">{row.icon}</span>
                <span className={clsx("pb-[2px] whitespace-nowrap", row.style)}>{row.label}</span>
              </li>
            ))}
          </ul>
          <svg viewBox="0 0 70 20" className="ml-[106px] h-5 w-[70px]" fill="#fff" stroke="#808080" strokeWidth="3">
            <path d="M5 22V4H12V22M59 22V4H66V22" />
          </svg>
        </div>
        <div className="flex w-7 justify-center border-l border-[#e4e4e4] bg-[#fafafa] pt-[2px]">
          <div className="h-[124px] w-4 rounded-full bg-[#c1c1c1]" />
        </div>
      </div>

      <div className="flex h-4 shrink-0 items-center bg-[#fafafa] pl-[178px]">
        <div className="size-3 rounded-full bg-[#c8c8c8]" />
      </div>

      <div className="mr-[5px] flex min-h-0 flex-1 flex-col rounded-r-lg border-t border-r border-[#c8c8c8] bg-[#d8d8d8] pt-1">
        <div className="mr-[6px] flex min-h-0 flex-1 flex-col overflow-hidden border-t-2 border-r-2 border-b-2 border-[#a4a4a4] bg-white">
          <div className="min-h-0 flex-1 overflow-hidden">
            <table className="w-full table-fixed border-collapse text-left text-[22px]">
              <thead>
                <tr className="h-[34px] border-b-2 border-[#c8c8c8] bg-[#f5f5f5] leading-7">
                  <th className="w-[186px] border-r-2 border-[#dcdcdc] p-0 pb-[2px] pl-[2px] font-normal">Property</th>
                  <th className="p-0 pb-[2px] pl-[15px] font-normal">Value</th>
                </tr>
              </thead>
              <tbody>
                {PROPERTY_ROWS.map((i) => (
                  <tr key={i} className="h-9 even:bg-[#e9f1ff]">
                    <td />
                    <td />
                  </tr>
                ))}
              </tbody>
            </table>
          </div>
          <div className="flex h-[30px] shrink-0 items-center border-t-2 border-[#e6e6e6] bg-[#fafafa] pr-[6px]">
            <div className="h-4 w-full rounded-r-full bg-[#c1c1c1]" />
          </div>
        </div>
        <div className="h-[31px] shrink-0" />
      </div>
      <div className="relative -mt-[18px] flex h-[48px] shrink-0 items-start pl-[35px]">
        <Segments items={["View", "Data"]} active={propTab} onSelect={setPropTab} className="w-[294px]" firstClass="w-[148px] pr-2" />
      </div>
      <Segments
        items={["Combo V...", "Tree ..."]}
        active={dock}
        onSelect={setDock}
        className="-ml-4 mr-[5px]"
        firstClass="w-[218px] pr-4"
      />
    </aside>
  );
}

/* ---------- technical drawing ---------- */

const ARROWS: [number, number, number][] = [
  // tip x, tip y, heading of the shaft in degrees
  [1147, 538, 0], [1295, 538, 180],
  [906, 745, 90], [906, 892, -90],
  [906, 893, 90], [906, 1102, -90],
  [1675, 621, 90], [1675, 892, -90],
  [1675, 893, 90], [1675, 1189, -90],
  [1112, 693, 58], [1182, 796, -122],
  [1352, 637, -122],
  [1282, 872, -122], [1308, 913, 58],
  [1578, 770, 157], [1012, 1016, -23],
  [1984, 548, 0], [2231, 548, 180],
  [1836, 767, 0], [1984, 767, 180],
  [1726, 794, 90], [1726, 991, -90],
  [1773, 829, 90], [1773, 957, -90],
  [1811, 844, 90], [1811, 942, -90],
  [1836, 1060, 180], [1857, 1060, 0],
  [2410, 621, 90], [2410, 1189, -90],
];

const DIM_TEXT: [string, number, number, boolean?][] = [
  ["6", 1221, 526],
  ["R4.25", 1295, 631],
  ["Ø5", 1234, 783],
  ["Ø2", 1342, 908],
  ["Ø25", 1159, 991],
  ["6", 894, 818, true],
  ["8.5", 894, 998, true],
  ["11", 1663, 757, true],
  ["12", 1663, 1041, true],
  ["8", 1714, 893, true],
  ["5.2", 1761, 893, true],
  ["4", 1799, 893, true],
  ["23", 2398, 905, true],
  ["10", 2108, 536],
  ["6", 1910, 754],
  ["0.85", 1846, 1048],
];

const COLUMNS: [string, number][] = [["F", 907], ["E", 1192], ["D", 1477], ["C", 1762], ["B", 2047], ["A", 2332]];
const ROWS: [string, number, number][] = [["4", 610, 617], ["3", 903, 910], ["2", 1197, 1204], ["1", 1489, 1497]];
const REVISIONS: [string, number][] = [["G", 1378], ["F", 1418], ["E", 1459], ["D", 1501], ["C", 1542], ["B", 1583]];

const CAPTIONS: [string, number, number][] = [
  ["DESIGNED BY:", 1606, 1366],
  ["DATE:", 1606, 1418],
  ["SIZE", 1606, 1465],
  ["SCALE", 1606, 1545],
  ["WEIGHT (kg)", 1716, 1545],
  ["DRAWING NUMBER", 1841, 1545],
  ["SHEET", 2225, 1545],
];

const FIELDS: [string, number, number][] = [
  ["Designed by Name", 1605, 1394],
  ["Date", 1605, 1443],
  ["Subtitle", 1840, 1425],
  ["Scale", 1614, 1583],
  ["Weight", 1727, 1583],
  ["Drawing number", 1838, 1583],
  ["Sheet", 2224, 1583],
];

function Sheet() {
  return (
    <svg viewBox="692 402 1818 1170" className="mt-[2px] ml-[294px] block h-[1170px] w-[1818px] shrink-0 bg-white">
      <g fill="none" stroke="#000" strokeWidth="2">
        <path d="M755 1580V463H2464V1580" />
        <path d="M1040 417V463M1325 417V463M1610 403V463M1894 417V463M2179 417V463" />
        <path d="M708 756H755M693 1049H755M708 1343H755M2464 756H2510M2464 1049H2510M2464 1343H2510" />
        <path d="M1600 1580V1349H2464M1835 1349V1580M2335 1349V1580M2365 1349V1580" />
        <path d="M1600 1452H2335M1600 1532H2335M1708 1452V1580M2217 1532V1580" />
        <path d="M2335 1390H2464M2335 1431H2464M2335 1472H2464M2335 1513H2464M2335 1554H2464" />
      </g>

      <g fill="none" stroke="#000" strokeWidth="2">
        <path d="M1148 621H1220A105 105 0 0 0 1370 621H1442A309 309 0 0 1 1382 1189H1208A309 309 0 0 1 1148 621Z" />
        <circle cx="1147" cy="745" r="62" />
        <circle cx="1443" cy="745" r="62" />
        <circle cx="1295" cy="1103" r="62" />
        <circle cx="1295" cy="893" r="25" />
        <path d="M1984 621H2231V1189H1984Z" />
        <path d="M1963 794H1836V829H1857V844H1935V942H1857V957H1836V991H1963ZM1963 868H1984M1963 918H1984" />
        <path d="M1963 794Q1973 804 1984 794M1963 991Q1973 982 1984 991" />
        <path d="M1984 794V1003" strokeWidth="3" />
      </g>

      <g fill="none" stroke="#0000ff" strokeWidth="2">
        <path d="M1147 532V732M1295 532V880M1147 538H1295" />
        <path d="M1295 547L1355 643H1235" />
        <path d="M1112 692L1181 795H1286" />
        <path d="M1282 871L1314 920H1371" />
        <path d="M1578 770L1043 1003H1275" />
        <path d="M901 745H1134M901 893H1282M901 1103H1282M906 745V1103" />
        <path d="M1307 893H1681M1382 621H1681M1394 1189H1681M1675 621V1189" />
        <path d="M1984 542V666M2231 542V666M1984 548H2231" />
        <path d="M1836 761V787M1984 761V787M1836 767H1984" />
        <path d="M1719 794H1824M1719 991H1824M1726 794V991" />
        <path d="M1766 829H1824M1766 957H1824M1773 829V957" />
        <path d="M1805 844H1845M1805 942H1845M1811 844V942" />
        <path d="M1836 991V1066M1857 968V1066M1812 1060H1880" />
        <path d="M2243 621H2416M2243 1189H2416M2410 621V1189" />
      </g>
      <g fill="#0000ff">
        {ARROWS.map(([x, y, a], i) => (
          <path key={i} d="M0 0L17 -6L24 -3V3L17 6Z" transform={`translate(${x} ${y}) rotate(${a})`} />
        ))}
        <circle cx="1147" cy="745" r="3" />
        <circle cx="1295" cy="547" r="3" />
        <circle cx="1295" cy="893" r="3" />
      </g>

      <g fill="#ff2a2a" fontSize="22" textAnchor="middle" className="font-['DejaVu_Sans',sans-serif]">
        {DIM_TEXT.map(([label, x, y, upright]) => (
          <text key={`${label}-${x}`} x={x} y={y} transform={upright ? `rotate(-90 ${x} ${y})` : undefined}>
            {label}
          </text>
        ))}
      </g>

      <g fontSize="32" textAnchor="middle" className="font-['Liberation_Mono',monospace]">
        {COLUMNS.map(([label, x]) => (
          <text key={label} x={x} y="438" transform={`rotate(-90 ${x} 438)`}>
            {label}
          </text>
        ))}
      </g>
      <g fontSize="30" textAnchor="middle" className="font-['Liberation_Sans',sans-serif]">
        {ROWS.map(([label, left, right]) => (
          <g key={label}>
            <text x="734" y={left} transform={`rotate(-90 734 ${left})`}>
              {label}
            </text>
            <text x="2489" y={right}>
              {label}
            </text>
          </g>
        ))}
      </g>
      <g fontSize="24" textAnchor="middle" className="font-['Liberation_Mono',monospace]">
        {REVISIONS.map(([label, y]) => (
          <g key={label}>
            <text x="2350" y={y}>
              {label}
            </text>
            <text x="2411" y={y}>
              _
            </text>
          </g>
        ))}
      </g>

      <g fontSize="13" className="font-['Liberation_Mono',monospace]">
        {CAPTIONS.map(([label, x, y]) => (
          <text key={label} x={x} y={y}>
            {label}
          </text>
        ))}
      </g>
      <g fill="#222" fontSize="24" className="font-['Liberation_Sans',sans-serif]">
        {FIELDS.map(([label, x, y]) => (
          <text key={label} x={x} y={y}>
            {label}
          </text>
        ))}
        <text x="1841" y="1382" fontSize="33">
          Title
        </text>
        <text x="1624" y="1510" fontSize="48">
          A4
        </text>
      </g>
      <g transform="translate(2255 1456)">
        <LogoShapes />
      </g>
    </svg>
  );
}

/* ---------- document tabs ---------- */

function TabClose() {
  return (
    <svg viewBox="0 0 24 24" className="size-6 shrink-0" aria-hidden="true">
      <circle cx="12" cy="12" r="12" fill="#5a5a5a" />
      <path d="M7 7L17 17M17 7L7 17" stroke="#e4e4e4" strokeWidth="2" />
    </svg>
  );
}

function DocumentTabs() {
  return (
    <div className="flex h-[72px] shrink-0 items-center justify-center bg-linear-to-b from-[#e1e1e1] from-[22px] to-[#ebebeb] to-[22px] pl-[344px]">
      <div className="flex h-[68px] overflow-hidden rounded-lg border-2 border-[#c6c6c6] bg-white text-[26px] whitespace-nowrap text-black">
        <button type="button" className="flex w-[314px] items-center border-r-2 border-[#e2e2e2] pl-[42px]">
          <TabClose />
          <svg viewBox="0 0 30 30" className="ml-[10px] size-[30px] shrink-0" aria-hidden="true">
            <circle cx="15" cy="15" r="14" fill="#4c8fd0" />
            <path d="M4 8Q10 0 18 3L13 10L16 14L8 20Q2 16 4 8ZM20 8Q28 8 27 18L22 24L18 16Z" fill="#c8e2f6" />
          </svg>
          <span className="ml-6 pb-1">Start page</span>
        </button>
        <button type="button" className="flex w-[424px] items-center pl-12">
          <TabClose />
          <Logo className="ml-3 h-14 w-[58px] shrink-0" />
          <span className="ml-[10px] pb-1">gauge_holder_2 : 1</span>
        </button>
        <button type="button" className="flex w-[466px] items-center bg-linear-to-b from-[#6cb1f8] to-[#187ffc] pl-12 text-white">
          <TabClose />
          <svg viewBox="0 0 58 56" className="ml-3 h-14 w-[58px] shrink-0" aria-hidden="true">
            <rect x="4" y="46" width="50" height="8" rx="3" fill="#1a5cae" opacity="0.6" />
            <rect x="2" y="3" width="54" height="46" rx="2" fill="#ececec" stroke="#a8a8a8" strokeWidth="2" />
          </svg>
          <span className="ml-[10px] pb-1">gauge_holder_2 : Page</span>
        </button>
      </div>
    </div>
  );
}

export default function App() {
  return (
    <div className="flex h-screen flex-col overflow-hidden bg-[#e8e8e8] font-['Liberation_Sans',Arial,sans-serif] text-black">
      <Defs />
      <MenuBar />
      <TitleBars />
      <FileToolbar />
      <ViewToolbar />
      <DrawingToolbar />
      <main className="flex min-h-0 flex-1">
        <ComboView />
        <section className="flex min-w-0 flex-1 flex-col">
          <div className="flex min-h-0 flex-1 items-start overflow-hidden bg-[conic-gradient(#fff_25%,#dcdcdc_0_50%,#fff_0_75%,#dcdcdc_0)] bg-size-[128px_128px]">
            <Sheet />
          </div>
          <DocumentTabs />
        </section>
      </main>
      <footer className="h-[22px] shrink-0 bg-[#e6e6e6]" />
    </div>
  );
}
